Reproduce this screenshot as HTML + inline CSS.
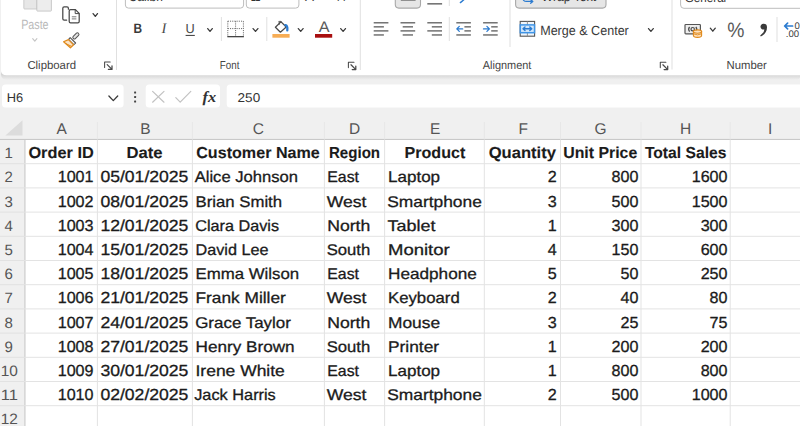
<!DOCTYPE html>
<html lang="en"><head><meta charset="utf-8"><title>Excel sheet</title>
<style>
html,body{margin:0;padding:0;background:#f0f0f0;overflow:hidden}
body{width:800px;height:426px;font-family:"Liberation Sans",sans-serif}
svg{display:block;position:absolute;left:0;top:0}
text{white-space:pre}
</style></head><body>
<svg width="800" height="426" viewBox="0 0 800 426" text-rendering="geometricPrecision">
<rect x="0" y="0" width="800" height="426" fill="#f0f0f0"/>
<defs><linearGradient id="sh" x1="0" y1="0" x2="0" y2="1"><stop offset="0.5" stop-color="#d4d4d4"/><stop offset="1" stop-color="#f0f0f0"/></linearGradient></defs>
<rect x="1" y="69" width="800" height="11" rx="6" fill="url(#sh)"/>
<path d="M1 0 H800 V75.3 H6.5 Q1 75.3 1 69.8 Z" fill="#ffffff"/>
<rect x="2" y="84.6" width="121.6" height="23" rx="3.5" fill="#fff"/>
<rect x="145.7" y="84.5" width="74.3" height="23" rx="3.5" fill="#fff"/>
<rect x="226.7" y="84.5" width="600" height="23" rx="3.5" fill="#fff"/>
<rect x="25.0" y="139.5" width="775.0" height="286.5" fill="#fff"/>
<rect x="0" y="138.9" width="800" height="1.1" fill="#c9c9c9"/>
<rect x="24.4" y="139.5" width="1.1" height="286.5" fill="#c9c9c9"/>
<rect x="96.9" y="140.0" width="1" height="286.5" fill="#e3e3e3"/>
<rect x="96.9" y="122" width="1" height="17.5" fill="#e7e7e7"/>
<rect x="191.9" y="140.0" width="1" height="286.5" fill="#e3e3e3"/>
<rect x="191.9" y="122" width="1" height="17.5" fill="#e7e7e7"/>
<rect x="323.9" y="140.0" width="1" height="286.5" fill="#e3e3e3"/>
<rect x="323.9" y="122" width="1" height="17.5" fill="#e7e7e7"/>
<rect x="384.1" y="140.0" width="1" height="286.5" fill="#e3e3e3"/>
<rect x="384.1" y="122" width="1" height="17.5" fill="#e7e7e7"/>
<rect x="483.8" y="140.0" width="1" height="286.5" fill="#e3e3e3"/>
<rect x="483.8" y="122" width="1" height="17.5" fill="#e7e7e7"/>
<rect x="560.0" y="140.0" width="1" height="286.5" fill="#e3e3e3"/>
<rect x="560.0" y="122" width="1" height="17.5" fill="#e7e7e7"/>
<rect x="640.5" y="140.0" width="1" height="286.5" fill="#e3e3e3"/>
<rect x="640.5" y="122" width="1" height="17.5" fill="#e7e7e7"/>
<rect x="729.7" y="140.0" width="1" height="286.5" fill="#e3e3e3"/>
<rect x="729.7" y="122" width="1" height="17.5" fill="#e7e7e7"/>
<rect x="25.0" y="163.20" width="775.0" height="1" fill="#e3e3e3"/>
<rect x="0" y="163.20" width="25.0" height="1" fill="#e2e2e2"/>
<rect x="25.0" y="187.40" width="775.0" height="1" fill="#e3e3e3"/>
<rect x="0" y="187.40" width="25.0" height="1" fill="#e2e2e2"/>
<rect x="25.0" y="211.60" width="775.0" height="1" fill="#e3e3e3"/>
<rect x="0" y="211.60" width="25.0" height="1" fill="#e2e2e2"/>
<rect x="25.0" y="235.80" width="775.0" height="1" fill="#e3e3e3"/>
<rect x="0" y="235.80" width="25.0" height="1" fill="#e2e2e2"/>
<rect x="25.0" y="260.00" width="775.0" height="1" fill="#e3e3e3"/>
<rect x="0" y="260.00" width="25.0" height="1" fill="#e2e2e2"/>
<rect x="25.0" y="284.20" width="775.0" height="1" fill="#e3e3e3"/>
<rect x="0" y="284.20" width="25.0" height="1" fill="#e2e2e2"/>
<rect x="25.0" y="308.40" width="775.0" height="1" fill="#e3e3e3"/>
<rect x="0" y="308.40" width="25.0" height="1" fill="#e2e2e2"/>
<rect x="25.0" y="332.60" width="775.0" height="1" fill="#e3e3e3"/>
<rect x="0" y="332.60" width="25.0" height="1" fill="#e2e2e2"/>
<rect x="25.0" y="356.80" width="775.0" height="1" fill="#e3e3e3"/>
<rect x="0" y="356.80" width="25.0" height="1" fill="#e2e2e2"/>
<rect x="25.0" y="381.00" width="775.0" height="1" fill="#e3e3e3"/>
<rect x="0" y="381.00" width="25.0" height="1" fill="#e2e2e2"/>
<rect x="25.0" y="405.20" width="775.0" height="1" fill="#e3e3e3"/>
<rect x="0" y="405.20" width="25.0" height="1" fill="#e2e2e2"/>
<path d="M22.5 120.3 V135.6 H5.4 Z" fill="#dcdcdc"/>
<g font-family="Liberation Sans, sans-serif" fill="#555555">
<text x="61.60" y="134.20" font-size="15.5" text-anchor="middle" fill="#555555">A</text>
<text x="145.30" y="134.20" font-size="15.5" text-anchor="middle" fill="#555555">B</text>
<text x="258.35" y="134.20" font-size="15.5" text-anchor="middle" fill="#555555">C</text>
<text x="354.70" y="134.20" font-size="15.5" text-anchor="middle" fill="#555555">D</text>
<text x="435.10" y="134.20" font-size="15.5" text-anchor="middle" fill="#555555">E</text>
<text x="523.30" y="134.20" font-size="15.5" text-anchor="middle" fill="#555555">F</text>
<text x="600.65" y="134.20" font-size="15.5" text-anchor="middle" fill="#555555">G</text>
<text x="685.65" y="134.20" font-size="15.5" text-anchor="middle" fill="#555555">H</text>
<text x="770.20" y="134.20" font-size="15.5" text-anchor="middle" fill="#555555">I</text>
<text x="8.60" y="158.10" font-size="15.0" text-anchor="middle" fill="#555555">1</text>
<text x="8.60" y="182.30" font-size="15.0" text-anchor="middle" fill="#555555">2</text>
<text x="8.60" y="206.50" font-size="15.0" text-anchor="middle" fill="#555555">3</text>
<text x="8.60" y="230.70" font-size="15.0" text-anchor="middle" fill="#555555">4</text>
<text x="8.60" y="254.90" font-size="15.0" text-anchor="middle" fill="#555555">5</text>
<text x="8.60" y="279.10" font-size="15.0" text-anchor="middle" fill="#555555">6</text>
<text x="8.60" y="303.30" font-size="15.0" text-anchor="middle" fill="#555555">7</text>
<text x="8.60" y="327.50" font-size="15.0" text-anchor="middle" fill="#555555">8</text>
<text x="8.60" y="351.70" font-size="15.0" text-anchor="middle" fill="#555555">9</text>
<text x="9.30" y="375.90" font-size="15.0" text-anchor="middle" fill="#555555" textLength="17.20" lengthAdjust="spacingAndGlyphs">10</text>
<text x="9.30" y="400.10" font-size="15.0" text-anchor="middle" fill="#555555" textLength="17.20" lengthAdjust="spacingAndGlyphs">11</text>
<text x="9.30" y="424.30" font-size="15.0" text-anchor="middle" fill="#555555" textLength="17.20" lengthAdjust="spacingAndGlyphs">12</text>
</g>
<g font-family="Liberation Sans, sans-serif" fill="#1b1b1b" stroke="#1b1b1b" stroke-width="0.3" stroke-linejoin="round">
<text x="28.40" y="158.10" font-size="15.9" font-weight="bold" textLength="65.40" lengthAdjust="spacingAndGlyphs" stroke-width="0.1">Order ID</text>
<text x="126.40" y="158.10" font-size="15.9" font-weight="bold" textLength="36.10" lengthAdjust="spacingAndGlyphs" stroke-width="0.1">Date</text>
<text x="196.20" y="158.10" font-size="15.9" font-weight="bold" textLength="123.60" lengthAdjust="spacingAndGlyphs" stroke-width="0.1">Customer Name</text>
<text x="328.90" y="158.10" font-size="15.9" font-weight="bold" textLength="51.20" lengthAdjust="spacingAndGlyphs" stroke-width="0.1">Region</text>
<text x="404.50" y="158.10" font-size="15.9" font-weight="bold" textLength="60.80" lengthAdjust="spacingAndGlyphs" stroke-width="0.1">Product</text>
<text x="488.70" y="158.10" font-size="15.9" font-weight="bold" textLength="67.30" lengthAdjust="spacingAndGlyphs" stroke-width="0.1">Quantity</text>
<text x="563.20" y="158.10" font-size="15.9" font-weight="bold" textLength="74.10" lengthAdjust="spacingAndGlyphs" stroke-width="0.1">Unit Price</text>
<text x="644.90" y="158.10" font-size="15.9" font-weight="bold" textLength="81.60" lengthAdjust="spacingAndGlyphs" stroke-width="0.1">Total Sales</text>
<text x="57.70" y="182.30" font-size="16.0" textLength="35.80" lengthAdjust="spacingAndGlyphs">1001</text>
<text x="100.40" y="182.30" font-size="16.0" textLength="88.00" lengthAdjust="spacingAndGlyphs">05/01/2025</text>
<text x="194.70" y="182.30" font-size="15.5" textLength="103.20" lengthAdjust="spacingAndGlyphs">Alice Johnson</text>
<text x="327.20" y="182.30" font-size="15.5" textLength="31.80" lengthAdjust="spacingAndGlyphs">East</text>
<text x="388.00" y="182.30" font-size="15.5" textLength="52.10" lengthAdjust="spacingAndGlyphs">Laptop</text>
<text x="547.75" y="182.30" font-size="16.0" textLength="8.95" lengthAdjust="spacingAndGlyphs">2</text>
<text x="611.55" y="182.30" font-size="16.0" textLength="26.85" lengthAdjust="spacingAndGlyphs">800</text>
<text x="691.70" y="182.30" font-size="16.0" textLength="35.80" lengthAdjust="spacingAndGlyphs">1600</text>
<text x="57.70" y="206.50" font-size="16.0" textLength="35.80" lengthAdjust="spacingAndGlyphs">1002</text>
<text x="100.40" y="206.50" font-size="16.0" textLength="88.00" lengthAdjust="spacingAndGlyphs">08/01/2025</text>
<text x="195.50" y="206.50" font-size="15.5" textLength="86.60" lengthAdjust="spacingAndGlyphs">Brian Smith</text>
<text x="326.70" y="206.50" font-size="15.5" textLength="39.80" lengthAdjust="spacingAndGlyphs">West</text>
<text x="387.20" y="206.50" font-size="15.5" textLength="94.70" lengthAdjust="spacingAndGlyphs">Smartphone</text>
<text x="547.75" y="206.50" font-size="16.0" textLength="8.95" lengthAdjust="spacingAndGlyphs">3</text>
<text x="611.55" y="206.50" font-size="16.0" textLength="26.85" lengthAdjust="spacingAndGlyphs">500</text>
<text x="691.70" y="206.50" font-size="16.0" textLength="35.80" lengthAdjust="spacingAndGlyphs">1500</text>
<text x="57.70" y="230.70" font-size="16.0" textLength="35.80" lengthAdjust="spacingAndGlyphs">1003</text>
<text x="100.40" y="230.70" font-size="16.0" textLength="88.00" lengthAdjust="spacingAndGlyphs">12/01/2025</text>
<text x="195.20" y="230.70" font-size="15.5" textLength="83.90" lengthAdjust="spacingAndGlyphs">Clara Davis</text>
<text x="327.20" y="230.70" font-size="15.5" textLength="43.10" lengthAdjust="spacingAndGlyphs">North</text>
<text x="387.50" y="230.70" font-size="15.5" textLength="47.90" lengthAdjust="spacingAndGlyphs">Tablet</text>
<text x="547.75" y="230.70" font-size="16.0" textLength="8.95" lengthAdjust="spacingAndGlyphs">1</text>
<text x="611.55" y="230.70" font-size="16.0" textLength="26.85" lengthAdjust="spacingAndGlyphs">300</text>
<text x="700.65" y="230.70" font-size="16.0" textLength="26.85" lengthAdjust="spacingAndGlyphs">300</text>
<text x="57.70" y="254.90" font-size="16.0" textLength="35.80" lengthAdjust="spacingAndGlyphs">1004</text>
<text x="100.40" y="254.90" font-size="16.0" textLength="88.00" lengthAdjust="spacingAndGlyphs">15/01/2025</text>
<text x="195.50" y="254.90" font-size="15.5" textLength="73.00" lengthAdjust="spacingAndGlyphs">David Lee</text>
<text x="326.70" y="254.90" font-size="15.5" textLength="43.60" lengthAdjust="spacingAndGlyphs">South</text>
<text x="388.00" y="254.90" font-size="15.5" textLength="61.70" lengthAdjust="spacingAndGlyphs">Monitor</text>
<text x="547.75" y="254.90" font-size="16.0" textLength="8.95" lengthAdjust="spacingAndGlyphs">4</text>
<text x="611.55" y="254.90" font-size="16.0" textLength="26.85" lengthAdjust="spacingAndGlyphs">150</text>
<text x="700.65" y="254.90" font-size="16.0" textLength="26.85" lengthAdjust="spacingAndGlyphs">600</text>
<text x="57.70" y="279.10" font-size="16.0" textLength="35.80" lengthAdjust="spacingAndGlyphs">1005</text>
<text x="100.40" y="279.10" font-size="16.0" textLength="88.00" lengthAdjust="spacingAndGlyphs">18/01/2025</text>
<text x="195.50" y="279.10" font-size="15.5" textLength="103.70" lengthAdjust="spacingAndGlyphs">Emma Wilson</text>
<text x="327.20" y="279.10" font-size="15.5" textLength="31.80" lengthAdjust="spacingAndGlyphs">East</text>
<text x="388.00" y="279.10" font-size="15.5" textLength="88.80" lengthAdjust="spacingAndGlyphs">Headphone</text>
<text x="547.75" y="279.10" font-size="16.0" textLength="8.95" lengthAdjust="spacingAndGlyphs">5</text>
<text x="620.50" y="279.10" font-size="16.0" textLength="17.90" lengthAdjust="spacingAndGlyphs">50</text>
<text x="700.65" y="279.10" font-size="16.0" textLength="26.85" lengthAdjust="spacingAndGlyphs">250</text>
<text x="57.70" y="303.30" font-size="16.0" textLength="35.80" lengthAdjust="spacingAndGlyphs">1006</text>
<text x="100.40" y="303.30" font-size="16.0" textLength="88.00" lengthAdjust="spacingAndGlyphs">21/01/2025</text>
<text x="195.50" y="303.30" font-size="15.5" textLength="90.30" lengthAdjust="spacingAndGlyphs">Frank Miller</text>
<text x="326.70" y="303.30" font-size="15.5" textLength="39.80" lengthAdjust="spacingAndGlyphs">West</text>
<text x="388.00" y="303.30" font-size="15.5" textLength="71.70" lengthAdjust="spacingAndGlyphs">Keyboard</text>
<text x="547.75" y="303.30" font-size="16.0" textLength="8.95" lengthAdjust="spacingAndGlyphs">2</text>
<text x="620.50" y="303.30" font-size="16.0" textLength="17.90" lengthAdjust="spacingAndGlyphs">40</text>
<text x="709.60" y="303.30" font-size="16.0" textLength="17.90" lengthAdjust="spacingAndGlyphs">80</text>
<text x="57.70" y="327.50" font-size="16.0" textLength="35.80" lengthAdjust="spacingAndGlyphs">1007</text>
<text x="100.40" y="327.50" font-size="16.0" textLength="88.00" lengthAdjust="spacingAndGlyphs">24/01/2025</text>
<text x="195.20" y="327.50" font-size="15.5" textLength="95.70" lengthAdjust="spacingAndGlyphs">Grace Taylor</text>
<text x="327.20" y="327.50" font-size="15.5" textLength="43.10" lengthAdjust="spacingAndGlyphs">North</text>
<text x="388.00" y="327.50" font-size="15.5" textLength="52.10" lengthAdjust="spacingAndGlyphs">Mouse</text>
<text x="547.75" y="327.50" font-size="16.0" textLength="8.95" lengthAdjust="spacingAndGlyphs">3</text>
<text x="620.50" y="327.50" font-size="16.0" textLength="17.90" lengthAdjust="spacingAndGlyphs">25</text>
<text x="709.60" y="327.50" font-size="16.0" textLength="17.90" lengthAdjust="spacingAndGlyphs">75</text>
<text x="57.70" y="351.70" font-size="16.0" textLength="35.80" lengthAdjust="spacingAndGlyphs">1008</text>
<text x="100.40" y="351.70" font-size="16.0" textLength="88.00" lengthAdjust="spacingAndGlyphs">27/01/2025</text>
<text x="195.50" y="351.70" font-size="15.5" textLength="99.10" lengthAdjust="spacingAndGlyphs">Henry Brown</text>
<text x="326.70" y="351.70" font-size="15.5" textLength="43.60" lengthAdjust="spacingAndGlyphs">South</text>
<text x="388.00" y="351.70" font-size="15.5" textLength="51.10" lengthAdjust="spacingAndGlyphs">Printer</text>
<text x="547.75" y="351.70" font-size="16.0" textLength="8.95" lengthAdjust="spacingAndGlyphs">1</text>
<text x="611.55" y="351.70" font-size="16.0" textLength="26.85" lengthAdjust="spacingAndGlyphs">200</text>
<text x="700.65" y="351.70" font-size="16.0" textLength="26.85" lengthAdjust="spacingAndGlyphs">200</text>
<text x="57.70" y="375.90" font-size="16.0" textLength="35.80" lengthAdjust="spacingAndGlyphs">1009</text>
<text x="100.40" y="375.90" font-size="16.0" textLength="88.00" lengthAdjust="spacingAndGlyphs">30/01/2025</text>
<text x="195.50" y="375.90" font-size="15.5" textLength="89.30" lengthAdjust="spacingAndGlyphs">Irene White</text>
<text x="327.20" y="375.90" font-size="15.5" textLength="31.80" lengthAdjust="spacingAndGlyphs">East</text>
<text x="388.00" y="375.90" font-size="15.5" textLength="52.10" lengthAdjust="spacingAndGlyphs">Laptop</text>
<text x="547.75" y="375.90" font-size="16.0" textLength="8.95" lengthAdjust="spacingAndGlyphs">1</text>
<text x="611.55" y="375.90" font-size="16.0" textLength="26.85" lengthAdjust="spacingAndGlyphs">800</text>
<text x="700.65" y="375.90" font-size="16.0" textLength="26.85" lengthAdjust="spacingAndGlyphs">800</text>
<text x="57.70" y="400.10" font-size="16.0" textLength="35.80" lengthAdjust="spacingAndGlyphs">1010</text>
<text x="100.40" y="400.10" font-size="16.0" textLength="88.00" lengthAdjust="spacingAndGlyphs">02/02/2025</text>
<text x="194.20" y="400.10" font-size="15.5" textLength="81.60" lengthAdjust="spacingAndGlyphs">Jack Harris</text>
<text x="326.70" y="400.10" font-size="15.5" textLength="39.80" lengthAdjust="spacingAndGlyphs">West</text>
<text x="387.20" y="400.10" font-size="15.5" textLength="94.70" lengthAdjust="spacingAndGlyphs">Smartphone</text>
<text x="547.75" y="400.10" font-size="16.0" textLength="8.95" lengthAdjust="spacingAndGlyphs">2</text>
<text x="611.55" y="400.10" font-size="16.0" textLength="26.85" lengthAdjust="spacingAndGlyphs">500</text>
<text x="691.70" y="400.10" font-size="16.0" textLength="35.80" lengthAdjust="spacingAndGlyphs">1000</text>
</g>
<g font-family="Liberation Sans, sans-serif">
<path d="M23.8 -1 H37 V9 H24.6 Q23.8 9 23.8 8.2 Z" fill="#e7e7e7" stroke="#c4c4c4" stroke-width="0.8"/>
<path d="M36.8 -1 H51.4 V10.4 Q51.4 11.1 50.7 11.1 H37.5 Q36.8 11.1 36.8 10.4 Z" fill="#ededed" stroke="#bfbfbf" stroke-width="0.8"/>
<text x="21.20" y="28.60" font-size="13.3" fill="#b9b9b9" textLength="27.40" lengthAdjust="spacingAndGlyphs">Paste</text>
<path d="M32.7 38.6 L34.8 41.2 L36.9 38.6" fill="none" stroke="#c4c4c4" stroke-width="1.1" stroke-linecap="round" stroke-linejoin="round"/>
<g fill="none" stroke="#484848" stroke-width="1.25" stroke-linejoin="round" stroke-linecap="round"><path d="M66.6 20.2 H64.2 Q62.8 20.2 62.8 18.8 V8.2 Q62.8 6.8 64.2 6.8 H67 Q68.4 6.8 68.4 8.2 V9.2"/><path d="M70.6 9.6 H75.4 L79.2 13.4 V21.4 Q79.2 22.8 77.8 22.8 H70.6 Q69.2 22.8 69.2 21.4 V11 Q69.2 9.6 70.6 9.6 Z" fill="#fff"/><path d="M75.2 9.9 V13.6 H78.9" stroke-width="1"/><path d="M72.2 16.8 H76 M72.2 18.9 H76" stroke-width="1" stroke="#777"/></g>
<path d="M93.1 13.6 L95.3 16.4 L97.5 13.6" fill="none" stroke="#3a3a3a" stroke-width="1.3" stroke-linecap="round" stroke-linejoin="round"/>
<g stroke-linejoin="round" stroke-linecap="round"><rect x="-1.5" y="-3.6" width="3" height="7.2" rx="1.3" transform="translate(75.9 35.9) rotate(45)" fill="#e4e4e4" stroke="#555" stroke-width="1"/><path d="M70.2 37.6 L75.6 43 L73.8 44.6 L68.6 39.4 Z" fill="#fff" stroke="#555" stroke-width="1.1"/><path d="M68.4 39.6 L63.6 41.8 L70.4 47.8 L73.6 44.8 Z" fill="#fbe3c5" stroke="#e08a1c" stroke-width="1.2"/><path d="M66.2 43.8 L71.6 46.4" stroke="#e08a1c" stroke-width="1" fill="none"/></g>
<text x="27.40" y="68.70" font-size="11.6" fill="#444444" textLength="48.60" lengthAdjust="spacingAndGlyphs">Clipboard</text>
<g transform="translate(104.0 61.4)" fill="none" stroke="#4a4a4a" stroke-width="1.05" stroke-linecap="round" stroke-linejoin="round"><path d="M0.6 6 V0.6 H6.2"/><path d="M3.2 3.2 L8 8 M8 4.4 V8 H4.4" stroke-width="1.25"/></g>
<rect x="116.0" y="0" width="1" height="70" fill="#e0e0e0"/>
<path d="M125.4 -3 V5 Q125.4 8.1 128.5 8.1 H240.5 Q243.6 8.1 243.6 5 V-3" fill="#fff" stroke="#bdbdbd" stroke-width="1"/>
<text x="128.60" y="0.70" font-size="12.6" fill="#333" textLength="34.40" lengthAdjust="spacingAndGlyphs">Calibri</text>
<path d="M246.3 -3 V5 Q246.3 8.1 249.4 8.1 H295.8 Q298.9 8.1 298.9 5 V-3" fill="#fff" stroke="#bdbdbd" stroke-width="1"/>
<text x="250.80" y="0.70" font-size="12.6" fill="#333" textLength="9.60" lengthAdjust="spacingAndGlyphs">11</text>
<text x="305.00" y="1.20" font-size="14" fill="#444" textLength="9.00" lengthAdjust="spacingAndGlyphs">A</text>
<text x="337.50" y="1.20" font-size="12" fill="#444" textLength="7.50" lengthAdjust="spacingAndGlyphs">A</text>
<text x="133.60" y="33.30" font-size="13.6" fill="#3a3a3a" font-weight="bold" textLength="8.60" lengthAdjust="spacingAndGlyphs">B</text>
<text x="161.60" y="33.30" font-size="14.6" fill="#4a4a4a" font-family="Liberation Serif, serif" font-style="italic">I</text>
<text x="185.60" y="32.60" font-size="13.0" fill="#4a4a4a" textLength="9.20" lengthAdjust="spacingAndGlyphs">U</text>
<rect x="185.6" y="34.9" width="9.2" height="1.1" fill="#4a4a4a"/>
<path d="M207.7 28.6 L210.0 31.4 L212.3 28.6" fill="none" stroke="#3a3a3a" stroke-width="1.3" stroke-linecap="round" stroke-linejoin="round"/>
<rect x="220.9" y="17" width="1" height="24" fill="#e0e0e0"/>
<g fill="none" stroke="#6a6a6a" stroke-width="1" stroke-dasharray="1.1 1.1"><path d="M227.8 21.2 H243.4 M227.8 21.2 V36 M243.4 21.2 V36 M235.6 21.2 V36 M227.8 28.6 H243.4"/></g>
<rect x="227.3" y="36" width="16.6" height="1.3" fill="#444"/>
<path d="M253.1 28.6 L255.5 31.4 L257.9 28.6" fill="none" stroke="#3a3a3a" stroke-width="1.3" stroke-linecap="round" stroke-linejoin="round"/>
<rect x="266.3" y="17" width="1" height="24" fill="#e0e0e0"/>
<g stroke-linejoin="round" stroke-linecap="round" fill="none"><path d="M280.6 21.4 L286.2 27 L280.4 32.2 L275.4 27.2 L281.2 21.6" stroke="#4a4a4a" stroke-width="1.25" fill="#fff"/><path d="M279.2 21.2 V24.2" stroke="#4a4a4a" stroke-width="1.1"/><path d="M285.4 25.2 Q287.8 25.6 287.3 30.4" stroke="#2b7bd0" stroke-width="2.3"/></g>
<rect x="272.4" y="34.0" width="17.2" height="3.7" fill="#f7ad55"/>
<path d="M298.3 28.6 L300.7 31.4 L303.1 28.6" fill="none" stroke="#3a3a3a" stroke-width="1.3" stroke-linecap="round" stroke-linejoin="round"/>
<text x="318.70" y="32.00" font-size="15.4" fill="#5a5a5a" textLength="10.80" lengthAdjust="spacingAndGlyphs">A</text>
<rect x="315" y="34.0" width="17.2" height="3.7" fill="#a80f10"/>
<path d="M340.7 28.6 L343.1 31.4 L345.5 28.6" fill="none" stroke="#3a3a3a" stroke-width="1.3" stroke-linecap="round" stroke-linejoin="round"/>
<text x="219.80" y="68.70" font-size="11.6" fill="#444444" textLength="19.60" lengthAdjust="spacingAndGlyphs">Font</text>
<g transform="translate(347.8 61.6)" fill="none" stroke="#4a4a4a" stroke-width="1.05" stroke-linecap="round" stroke-linejoin="round"><path d="M0.6 6 V0.6 H6.2"/><path d="M3.2 3.2 L8 8 M8 4.4 V8 H4.4" stroke-width="1.25"/></g>
<rect x="359.8" y="0" width="1" height="70" fill="#e0e0e0"/>
<path d="M395.3 -3 V4.6 Q395.3 8.1 398.8 8.1 H417 Q420.5 8.1 420.5 4.6 V-3" fill="#e6e6e6" stroke="#a8a8a8" stroke-width="1.1"/>
<rect x="400.8" y="-0.6" width="14.8" height="1.2" fill="#555"/>
<rect x="427.3" y="3.2" width="14.8" height="1.3" fill="#555"/>
<rect x="448.8" y="0" width="1" height="6" fill="#e0e0e0"/>
<path d="M460.4 2.6 L465.4 -1.6" stroke="#2b7bd0" stroke-width="1.4" fill="none" stroke-linecap="round"/>
<rect x="373.7" y="22.15" width="14.7" height="1.3" fill="#5e5e5e"/>
<rect x="373.7" y="26.20" width="10.2" height="1.3" fill="#5e5e5e"/>
<rect x="373.7" y="30.25" width="14.7" height="1.3" fill="#5e5e5e"/>
<rect x="373.7" y="34.30" width="10.2" height="1.3" fill="#5e5e5e"/>
<rect x="400.5" y="22.15" width="14.7" height="1.3" fill="#5e5e5e"/>
<rect x="402.7" y="26.20" width="10.3" height="1.3" fill="#5e5e5e"/>
<rect x="400.5" y="30.25" width="14.7" height="1.3" fill="#5e5e5e"/>
<rect x="402.7" y="34.30" width="10.3" height="1.3" fill="#5e5e5e"/>
<rect x="427.3" y="22.15" width="14.7" height="1.3" fill="#5e5e5e"/>
<rect x="431.8" y="26.20" width="10.2" height="1.3" fill="#5e5e5e"/>
<rect x="427.3" y="30.25" width="14.7" height="1.3" fill="#5e5e5e"/>
<rect x="431.8" y="34.30" width="10.2" height="1.3" fill="#5e5e5e"/>
<rect x="448.8" y="17" width="1" height="24" fill="#e0e0e0"/>
<rect x="456.3" y="22.15" width="14.6" height="1.3" fill="#5e5e5e"/>
<rect x="464.4" y="26.20" width="6.5" height="1.3" fill="#5e5e5e"/>
<rect x="464.4" y="30.25" width="6.5" height="1.3" fill="#5e5e5e"/>
<rect x="456.3" y="34.30" width="14.6" height="1.3" fill="#5e5e5e"/>
<path d="M462.7 28.9 H456.9 M459.3 26.4 L456.8 28.9 L459.3 31.4" fill="none" stroke="#2b7bd0" stroke-width="1.3" stroke-linecap="round" stroke-linejoin="round"/>
<rect x="483.1" y="22.15" width="14.6" height="1.3" fill="#5e5e5e"/>
<rect x="491.2" y="26.20" width="6.5" height="1.3" fill="#5e5e5e"/>
<rect x="491.2" y="30.25" width="6.5" height="1.3" fill="#5e5e5e"/>
<rect x="483.1" y="34.30" width="14.6" height="1.3" fill="#5e5e5e"/>
<path d="M483.5 28.9 H489.3 M486.9 26.4 L489.4 28.9 L486.9 31.4" fill="none" stroke="#2b7bd0" stroke-width="1.3" stroke-linecap="round" stroke-linejoin="round"/>
<rect x="509.5" y="0" width="1" height="47" fill="#e0e0e0"/>
<path d="M515.6 -3 V4.6 Q515.6 8.1 519.1 8.1 H602.5 Q606 8.1 606 4.6 V-3" fill="#e6e6e6" stroke="#a8a8a8" stroke-width="1.1"/>
<path d="M523 -2 Q523 1.6 526.6 1.4 H532.6 M530.4 -0.6 L532.8 1.4 L530.6 3.2" fill="none" stroke="#2b7bd0" stroke-width="1.3" stroke-linecap="round" stroke-linejoin="round"/>
<text x="541.60" y="0.90" font-size="13.2" fill="#333" textLength="54.60" lengthAdjust="spacingAndGlyphs">Wrap Text</text>
<rect x="520.2" y="21.4" width="14.4" height="14.8" fill="#f0f6fc" stroke="#555" stroke-width="1.1"/>
<path d="M527.4 21.4 V25 M527.4 32.6 V36.2" stroke="#8a8a8a" stroke-width="0.9"/>
<rect x="520.3" y="24.9" width="14.2" height="7.8" fill="#d2e7fb" stroke="#3f94e6" stroke-width="1.5"/>
<path d="M523.2 28.8 H531.6 M525 27 L523 28.8 L525 30.6 M529.8 27 L531.8 28.8 L529.8 30.6" fill="none" stroke="#2b7bd0" stroke-width="1.4" stroke-linecap="round" stroke-linejoin="round"/>
<text x="540.20" y="35.00" font-size="13.3" fill="#3a3a3a" textLength="88.60" lengthAdjust="spacingAndGlyphs">Merge &amp; Center</text>
<path d="M648.5 28.6 L650.9 31.4 L653.3 28.6" fill="none" stroke="#3a3a3a" stroke-width="1.3" stroke-linecap="round" stroke-linejoin="round"/>
<text x="482.80" y="68.70" font-size="11.6" fill="#444444" textLength="48.60" lengthAdjust="spacingAndGlyphs">Alignment</text>
<g transform="translate(659.7 61.6)" fill="none" stroke="#4a4a4a" stroke-width="1.05" stroke-linecap="round" stroke-linejoin="round"><path d="M0.6 6 V0.6 H6.2"/><path d="M3.2 3.2 L8 8 M8 4.4 V8 H4.4" stroke-width="1.25"/></g>
<rect x="671.5" y="0" width="1" height="69.5" fill="#e0e0e0"/>
<path d="M680.6 -3 V5 Q680.6 8.3 683.9 8.3 H805" fill="#fff" stroke="#bdbdbd" stroke-width="1"/>
<text x="684.80" y="1.70" font-size="12.6" fill="#333" textLength="41.40" lengthAdjust="spacingAndGlyphs">General</text>
<rect x="685" y="24.5" width="15.4" height="9.4" rx="0.8" fill="#ededed" stroke="#555" stroke-width="1.2"/>
<path d="M689.6 27 Q687.6 29.2 689.6 31.6 M695.8 27 Q697.8 29.2 695.8 31.6" fill="none" stroke="#4a4a4a" stroke-width="1.2"/>
<circle cx="692.7" cy="29.2" r="1.7" fill="none" stroke="#4a4a4a" stroke-width="1.2"/>
<path d="M693.4 31.6 V35.6 Q693.4 37.4 697.5 37.4 Q701.6 37.4 701.6 35.6 V31.6 Z" fill="#fde1bf" stroke="#e08a1c" stroke-width="1.1"/>
<ellipse cx="697.5" cy="31.6" rx="4.1" ry="1.7" fill="#fde1bf" stroke="#e08a1c" stroke-width="1.1"/>
<path d="M693.4 33.8 Q697.5 36 701.6 33.8" fill="none" stroke="#e08a1c" stroke-width="0.9"/>
<path d="M710.3 28.2 L712.8 31.2 L715.3 28.2" fill="none" stroke="#3a3a3a" stroke-width="1.3" stroke-linecap="round" stroke-linejoin="round"/>
<text x="727.20" y="36.80" font-size="20.8" fill="#5a5a5a" textLength="17.20" lengthAdjust="spacingAndGlyphs">%</text>
<path d="M763.6 23.8 A2.9 2.9 0 1 0 764.4 29.4 Q764 33 760.2 35.6 L760.8 36.4 Q767 33.4 767 27.2 Q767 23.8 763.6 23.8 Z" fill="#3a3a3a"/>
<rect x="776.5" y="17" width="1" height="25" fill="#e0e0e0"/>
<path d="M784.8 26 H792.6 M787.6 23.2 L784.6 26 L787.6 28.8" fill="none" stroke="#2b7bd0" stroke-width="1.7" stroke-linecap="round" stroke-linejoin="round"/>
<text x="794.40" y="28.50" font-size="9.6" fill="#3c3c3c">0</text>
<text x="785.80" y="37.10" font-size="9.6" fill="#3c3c3c">.00</text>
<text x="726.60" y="68.90" font-size="11.6" fill="#444444" textLength="40.20" lengthAdjust="spacingAndGlyphs">Number</text>
<text x="6.80" y="101.80" font-size="12.8" fill="#333" textLength="16.40" lengthAdjust="spacingAndGlyphs">H6</text>
<path d="M108.9 96.0 L113.3 100.6 L117.7 96.0" fill="none" stroke="#3a3a3a" stroke-width="1.3" stroke-linecap="round" stroke-linejoin="round"/>
<rect x="134.1" y="91.6" width="2" height="2" rx="0.5" fill="#444"/>
<rect x="134.1" y="96.0" width="2" height="2" rx="0.5" fill="#444"/>
<rect x="134.1" y="100.4" width="2" height="2" rx="0.5" fill="#444"/>
<path d="M152.6 91.4 L164 102.2 M164 91.4 L152.6 102.2" stroke="#c2c2c2" stroke-width="1.2" fill="none" stroke-linecap="round"/>
<path d="M175.8 97.6 L180.2 102.2 L190.8 91.4" stroke="#c2c2c2" stroke-width="1.2" fill="none" stroke-linecap="round" stroke-linejoin="round"/>
<text x="202.60" y="101.60" font-size="15.5" fill="#333" font-weight="bold" font-family="Liberation Serif, serif" font-style="italic" textLength="13.60" lengthAdjust="spacingAndGlyphs">fx</text>
<text x="237.60" y="101.80" font-size="12.8" fill="#333" textLength="22.60" lengthAdjust="spacingAndGlyphs">250</text>
</g>
</svg>
</body></html>
